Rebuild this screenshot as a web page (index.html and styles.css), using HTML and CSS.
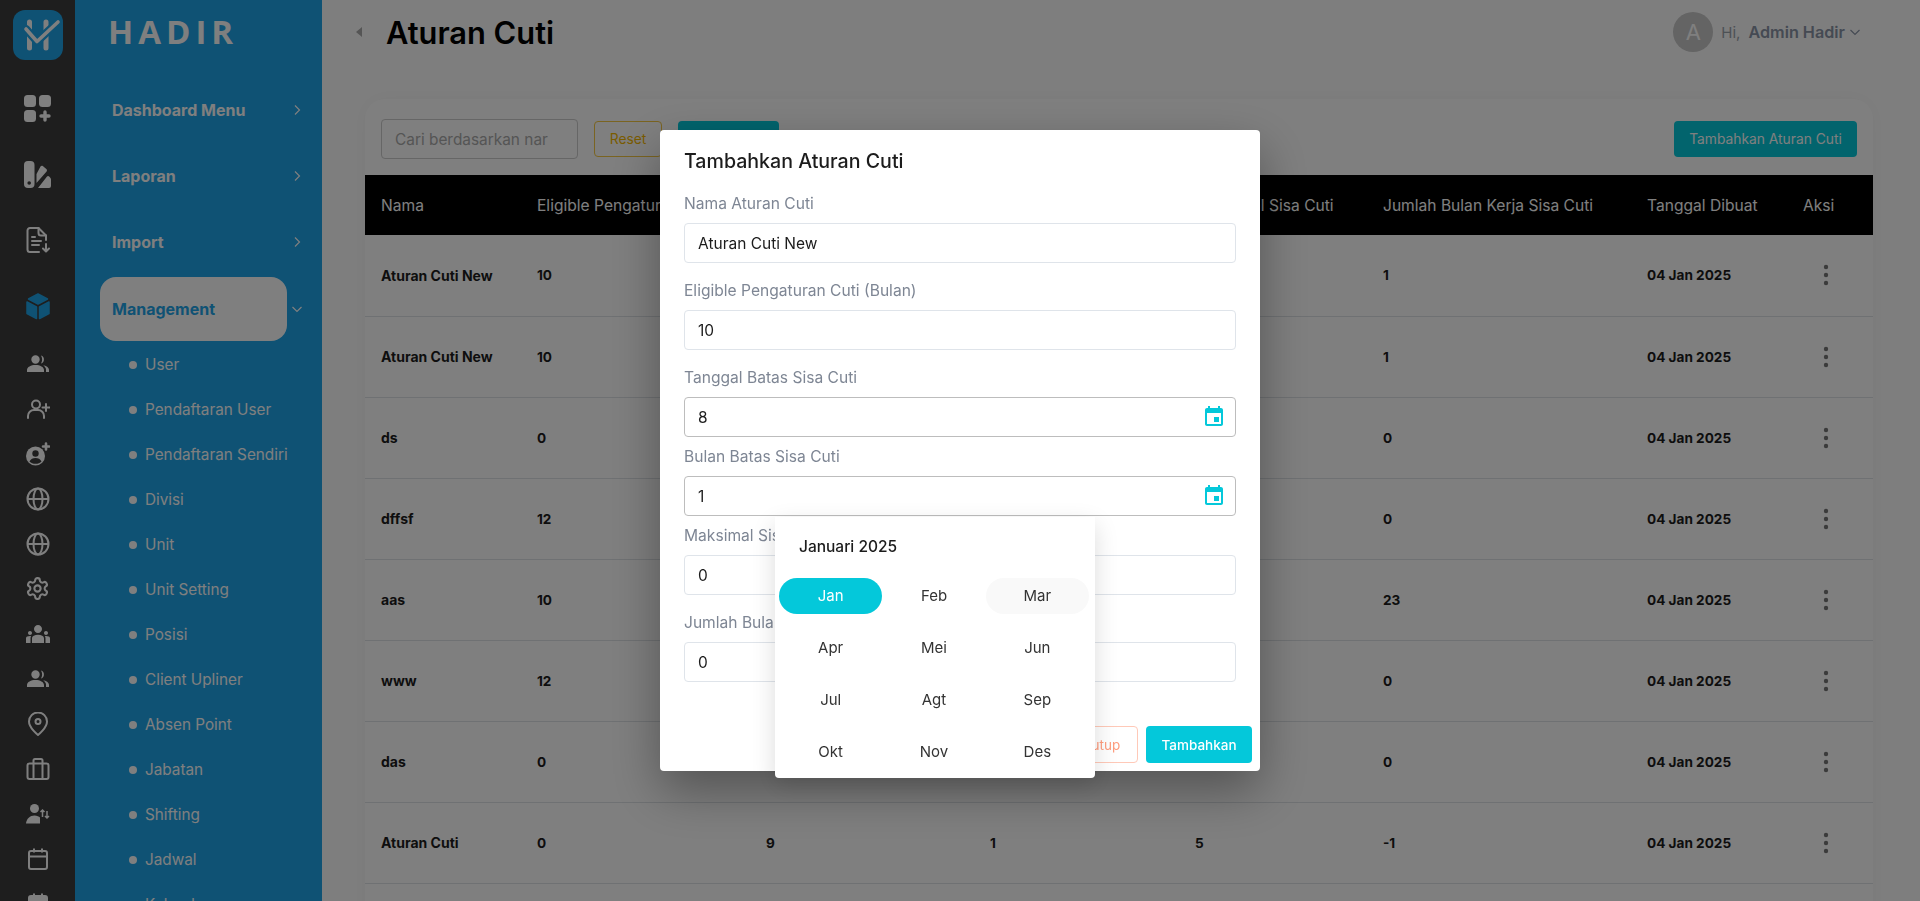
FILE: index.html
```html
<!DOCTYPE html>
<html lang="en">
<head>
  <meta charset="UTF-8">
  <meta name="viewport" content="width=device-width, initial-scale=1.0">
  <title>Aturan Cuti</title>
  <link rel="stylesheet" href="styles.css">
</head>
<body>
<svg class="defs" width="0" height="0">
  <symbol id="i-people" viewBox="0 0 24 24"><path fill="currentColor" d="M9.500 3.300a4.200 4.200 0 1 1 0 8.400 4.200 4.200 0 0 1 0-8.400zM1 20v-2c0-3 4-5 8.500-5s8.500 2 8.500 5v2zM15 3.500a4.200 4.200 0 0 1 0 8c1.500-2.500 1.500-5.500 0-8zM17 13.200c3 .4 6 2 6 4.800v2h-3v-2.500c0-1.700-1.300-3.300-3-4.300z"/></symbol>
  <symbol id="i-globe" viewBox="0 0 24 24"><g fill="none" stroke="currentColor" stroke-width="2"><circle cx="12" cy="12" r="10.5"/><ellipse cx="12" cy="12" rx="4.5" ry="10.5"/><path d="M1.5 12h21"/></g></symbol>
  <symbol id="i-calendar" viewBox="0 0 24 24"><g fill="none" stroke="currentColor" stroke-width="2"><rect x="3" y="4" width="18" height="18" rx="2"/><path d="M3 9.5h18M8 1.5v4M16 1.5v4"/></g></symbol>
  <symbol id="i-event" viewBox="0 0 24 24"><path fill="currentColor" d="M17 12h-5v5h5v-5zM16 1v2H8V1H6v2H5c-1.11 0-1.99.9-1.99 2L3 19c0 1.1.89 2 2 2h14c1.1 0 2-.9 2-2V5c0-1.1-.9-2-2-2h-1V1h-2zm3 18H5V8h14v11z"/></symbol>
  <symbol id="i-chev" viewBox="0 0 12 12"><path fill="none" stroke="currentColor" stroke-width="1.2" d="M4 1.500 8.500 6 4 10.500"/></symbol>
  <symbol id="i-dots" viewBox="0 0 6 24"><g fill="currentColor"><circle cx="3" cy="4" r="2.200"/><circle cx="3" cy="12" r="2.200"/><circle cx="3" cy="20" r="2.200"/></g></symbol>
</svg>

<div class="app">
  <aside class="rail">
    <div class="logo">
      <svg width="50" height="50" viewBox="0 0 50 50"><g fill="none" stroke-linecap="round" stroke-linejoin="round"><path stroke="#fff" stroke-width="5" d="M16.500 12v26M33 12v26"/><path stroke="#1ea4e8" stroke-width="8" d="M13 19l11 12.500L45 12"/><path stroke="#fff" stroke-width="3.600" d="M13 19l11 12.500L45 12"/></g></svg>
    </div>
    <div class="rail-item big"><svg width="27" height="27" viewBox="0 0 27 27"><g fill="currentColor"><rect width="12" height="12" rx="3.5"/><rect x="15" width="12" height="12" rx="3.5"/><rect y="15" width="12" height="12" rx="3.5"/></g><path fill="none" stroke="currentColor" stroke-width="3.4" stroke-linecap="round" d="M21 17v8M17 21h8"/></svg></div>
    <div class="rail-item big"><svg width="27" height="27" viewBox="0 0 27 27"><rect width="10.500" height="27" rx="4" fill="currentColor"/><circle cx="5.200" cy="22" r="1.800" fill="#3c3c3c"/><path fill="currentColor" d="M12.500 22v-9l4-7.500c.5-.9 1.500-1.100 2.300-.5l3.500 3c.8.7.9 1.700.3 2.500zM14 27l9-11.500c.6-.7 1.500-.7 2.200 0l1.300 1.600c.3.4.5.9.5 1.400V25a2 2 0 0 1-2 2z"/></svg></div>
    <div class="rail-item big"><svg width="24" height="26" viewBox="0 0 24 26"><g fill="none" stroke="currentColor" stroke-width="2" stroke-linecap="round" stroke-linejoin="round"><path d="M13 25H4a2.500 2.500 0 0 1-2.500-2.500v-19A2.500 2.500 0 0 1 4 1h8.500L20 8.500V13"/><path d="M12.500 1v5A2.500 2.500 0 0 0 15 8.500h5M6 10h3M6 14h9M6 18h7M20 17v7M17 21.500l3 3 3-3"/></g></svg></div>
    <div class="rail-item big active"><svg width="24" height="27" viewBox="0 0 24 27"><g fill="currentColor" stroke="currentColor" stroke-width="1.500" stroke-linejoin="round"><path d="M12 1l9.500 5L12 11 2.500 6z"/><path d="M1 9l9.500 5v11.500L1 20.500z"/><path d="M23 9l-9.500 5v11.500L23 20.500z"/></g></svg></div>

    <div class="rail-item"><svg width="24" height="24"><use href="#i-people"/></svg></div>
    <div class="rail-item"><svg width="24" height="24" viewBox="0 0 24 24"><g fill="none" stroke="currentColor" stroke-width="2" stroke-linecap="round"><circle cx="10" cy="7.500" r="4"/><path d="M2 21v-2a6 6 0 0 1 6-6h4a6 6 0 0 1 6 6v2M20 7v7M16.500 10.500h7"/></g></svg></div>
    <div class="rail-item"><svg width="24" height="24" viewBox="0 0 24 24"><circle cx="9.500" cy="14" r="9.500" fill="currentColor"/><circle cx="9.500" cy="11.500" r="3.200" fill="#3c3c3c"/><path fill="#3c3c3c" d="M3.500 19.500c1-2.500 3.500-3.500 6-3.500s5 1 6 3.500c-1.500 1.500-3.500 2.300-6 2.300s-4.500-.8-6-2.300z"/><path fill="none" stroke="currentColor" stroke-width="2.600" stroke-linecap="round" d="M20 1.500v6M17 4.500h6"/></svg></div>
    <div class="rail-item"><svg width="24" height="24"><use href="#i-globe"/></svg></div>
    <div class="rail-item"><svg width="24" height="24"><use href="#i-globe"/></svg></div>
    <div class="rail-item"><svg width="25" height="25" viewBox="0 0 24 24"><g fill="none" stroke="currentColor" stroke-width="2"><path d="M12.220 2h-.44a2 2 0 0 0-2 2v.18a2 2 0 0 1-1 1.730l-.43.250a2 2 0 0 1-2 0l-.15-.08a2 2 0 0 0-2.730.730l-.22.380a2 2 0 0 0 .730 2.730l.15.100a2 2 0 0 1 1 1.720v.510a2 2 0 0 1-1 1.740l-.15.090a2 2 0 0 0-.730 2.730l.22.380a2 2 0 0 0 2.730.730l.15-.08a2 2 0 0 1 2 0l.43.250a2 2 0 0 1 1 1.730V20a2 2 0 0 0 2 2h.44a2 2 0 0 0 2-2v-.18a2 2 0 0 1 1-1.730l.43-.25a2 2 0 0 1 2 0l.15.08a2 2 0 0 0 2.730-.73l.22-.39a2 2 0 0 0-.73-2.730l-.15-.08a2 2 0 0 1-1-1.740v-.5a2 2 0 0 1 1-1.740l.15-.09a2 2 0 0 0 .73-2.730l-.22-.38a2 2 0 0 0-2.730-.73l-.15.08a2 2 0 0 1-2 0l-.43-.25a2 2 0 0 1-1-1.730V4a2 2 0 0 0-2-2z"/><circle cx="12" cy="12" r="3"/></g></svg></div>
    <div class="rail-item"><svg width="24" height="24" viewBox="0 0 24 24"><path fill="currentColor" d="M12 12.750c1.630 0 3.070.39 4.240.9 1.080.48 1.760 1.560 1.760 2.730V21H6v-4.610c0-1.180.68-2.260 1.760-2.730 1.170-.52 2.610-.91 4.240-.91zM4 13c1.100 0 2-.9 2-2s-.9-2-2-2-2 .9-2 2 .9 2 2 2zm1.130 1.100c-.37-.06-.74-.1-1.130-.1-.99 0-1.930.21-2.780.58C.48 14.900 0 15.620 0 16.430V21h4.500v-4.610c0-.83.23-1.610.63-2.290zM20 13c1.100 0 2-.9 2-2s-.9-2-2-2-2 .9-2 2 .9 2 2 2zm4 3.430c0-.81-.48-1.530-1.220-1.850-.85-.37-1.790-.58-2.780-.58-.39 0-.76.04-1.130.1.4.68.63 1.460.63 2.290V21H24v-4.570zM12 3c2.200 0 4 1.800 4 4s-1.800 4-4 4-4-1.800-4-4 1.800-4 4-4z"/></svg></div>
    <div class="rail-item"><svg width="24" height="24"><use href="#i-people"/></svg></div>
    <div class="rail-item"><svg width="24" height="24" viewBox="0 0 24 24"><g fill="none" stroke="currentColor" stroke-width="2" stroke-linejoin="round"><path d="M12 23s9-7 9-13.500A9 9 0 0 0 3 9.500C3 16 12 23 12 23z"/><circle cx="12" cy="9.500" r="2.500"/></g></svg></div>
    <div class="rail-item"><svg width="24" height="24" viewBox="0 0 24 24"><g fill="none" stroke="currentColor" stroke-width="2"><rect x="1.500" y="6.500" width="21" height="15.500" rx="2"/><path d="M7.500 22V3.500A1.500 1.500 0 0 1 9 2h6a1.500 1.500 0 0 1 1.500 1.500V22"/></g></svg></div>
    <div class="rail-item"><svg width="24" height="24" viewBox="0 0 24 24"><circle cx="8.500" cy="6.500" r="4.500" fill="currentColor"/><path fill="currentColor" d="M0 21.500c.5-5 4-8 8.500-8 2.500 0 4.500 1 5.500 2v6z"/><path fill="none" stroke="currentColor" stroke-width="1.500" d="M16.500 15V8M14.500 10l2-2 2 2M21 9v7M19 14l2 2 2-2"/></svg></div>
    <div class="rail-item"><svg width="24" height="24"><use href="#i-calendar"/></svg></div>
    <div class="rail-item"><svg width="24" height="24" viewBox="0 0 24 24"><rect x="3" y="4" width="18" height="6" fill="currentColor"/><use href="#i-calendar" width="24" height="24"/></svg></div>
  </aside>

  <nav class="sidebar">
    <div class="brand">HADIR</div>
    <div class="nav-item"><span class="nav-label">Dashboard Menu</span><svg class="chev"><use href="#i-chev"/></svg></div>
    <div class="nav-item"><span class="nav-label">Laporan</span><svg class="chev"><use href="#i-chev"/></svg></div>
    <div class="nav-item"><span class="nav-label">Import</span><svg class="chev"><use href="#i-chev"/></svg></div>
    <div class="nav-item open"><span class="nav-label">Management</span><svg class="chev down"><use href="#i-chev"/></svg></div>
    <ul class="submenu">
      <li>User</li>
      <li>Pendaftaran User</li>
      <li>Pendaftaran Sendiri</li>
      <li>Divisi</li>
      <li>Unit</li>
      <li>Unit Setting</li>
      <li>Posisi</li>
      <li>Client Upliner</li>
      <li>Absen Point</li>
      <li>Jabatan</li>
      <li>Shifting</li>
      <li>Jadwal</li>
      <li>Kalender</li>
    </ul>
  </nav>

  <main class="main">
    <header class="topbar">
      <div class="page-title"><span class="caret"></span><h1>Aturan Cuti</h1></div>
      <div class="user">
        <span class="avatar">A</span>
        <span class="hi">Hi,</span>
        <span class="user-name">Admin Hadir</span>
        <svg class="user-chev" width="12" height="12"><use href="#i-chev"/></svg>
      </div>
    </header>

    <section class="card">
      <div class="toolbar">
        <div class="search">Cari berdasarkan nar</div>
        <span class="btn btn-reset">Reset</span>
        <span class="btn btn-search">Cari</span>
        <span class="btn btn-add">Tambahkan Aturan Cuti</span>
      </div>
      <table class="table">
        <colgroup>
          <col class="c-name"><col class="c-eligible"><col class="c-date"><col class="c-month"><col class="c-max"><col class="c-work"><col class="c-created"><col class="c-action">
        </colgroup>
        <thead>
          <tr><th>Nama</th><th>Eligible Pengaturan Cuti</th><th>Tanggal Batas Sisa Cuti</th><th>Bulan Batas Sisa Cuti</th><th>Maksimal Sisa Cuti</th><th>Jumlah Bulan Kerja Sisa Cuti</th><th>Tanggal Dibuat</th><th>Aksi</th></tr>
        </thead>
        <tbody>
          <tr><td>Aturan Cuti New</td><td>10</td><td>8</td><td>1</td><td>0</td><td>1</td><td>04 Jan 2025</td><td><svg class="dots" width="6" height="24"><use href="#i-dots"/></svg></td></tr>
          <tr><td>Aturan Cuti New</td><td>10</td><td>8</td><td>1</td><td>0</td><td>1</td><td>04 Jan 2025</td><td><svg class="dots" width="6" height="24"><use href="#i-dots"/></svg></td></tr>
          <tr><td>ds</td><td>0</td><td>1</td><td>1</td><td>0</td><td>0</td><td>04 Jan 2025</td><td><svg class="dots" width="6" height="24"><use href="#i-dots"/></svg></td></tr>
          <tr><td>dffsf</td><td>12</td><td>1</td><td>1</td><td>0</td><td>0</td><td>04 Jan 2025</td><td><svg class="dots" width="6" height="24"><use href="#i-dots"/></svg></td></tr>
          <tr><td>aas</td><td>10</td><td>1</td><td>1</td><td>0</td><td>23</td><td>04 Jan 2025</td><td><svg class="dots" width="6" height="24"><use href="#i-dots"/></svg></td></tr>
          <tr><td>www</td><td>12</td><td>1</td><td>1</td><td>0</td><td>0</td><td>04 Jan 2025</td><td><svg class="dots" width="6" height="24"><use href="#i-dots"/></svg></td></tr>
          <tr><td>das</td><td>0</td><td>1</td><td>1</td><td>0</td><td>0</td><td>04 Jan 2025</td><td><svg class="dots" width="6" height="24"><use href="#i-dots"/></svg></td></tr>
          <tr><td>Aturan Cuti</td><td>0</td><td>9</td><td>1</td><td>5</td><td>-1</td><td>04 Jan 2025</td><td><svg class="dots" width="6" height="24"><use href="#i-dots"/></svg></td></tr>
        </tbody>
      </table>
    </section>
  </main>
</div>

<div class="backdrop">
  <div class="modal">
    <h2 class="modal-title">Tambahkan Aturan Cuti</h2>

    <div class="field">
      <div class="field-label">Nama Aturan Cuti</div>
      <div class="input">Aturan Cuti New</div>
    </div>
    <div class="field">
      <div class="field-label">Eligible Pengaturan Cuti (Bulan)</div>
      <div class="input">10</div>
    </div>
    <div class="field field-date">
      <div class="field-label">Tanggal Batas Sisa Cuti</div>
      <div class="input input-date">8<svg width="24" height="24"><use href="#i-event"/></svg></div>
    </div>
    <div class="field field-date">
      <div class="field-label">Bulan Batas Sisa Cuti</div>
      <div class="input input-date">1<svg width="24" height="24"><use href="#i-event"/></svg></div>
    </div>
    <div class="field">
      <div class="field-label">Maksimal Sisa Cuti</div>
      <div class="input">0</div>
    </div>
    <div class="field">
      <div class="field-label">Jumlah Bulan Kerja Sisa Cuti</div>
      <div class="input">0</div>
    </div>

    <div class="modal-footer">
      <span class="btn btn-close">Tutup</span>
      <span class="btn btn-submit">Tambahkan</span>
    </div>

    <div class="month-popup">
      <div class="month-title">Januari 2025</div>
      <div class="month-grid">
        <span class="month selected">Jan</span><span class="month">Feb</span><span class="month hover">Mar</span>
        <span class="month">Apr</span><span class="month">Mei</span><span class="month">Jun</span>
        <span class="month">Jul</span><span class="month">Agt</span><span class="month">Sep</span>
        <span class="month">Okt</span><span class="month">Nov</span><span class="month">Des</span>
      </div>
    </div>
  </div>
</div>
</body>
</html>
```

FILE: styles.css
```css
* {
  box-sizing: border-box;
}

body {
  margin: 0;
  height: 100vh;
  overflow: hidden;
  background: #fdfdfd;
  color: #1c1c1c;
  font-family: Inter, "Liberation Sans", sans-serif;
  font-size: 15px;
}

.defs {
  position: absolute;
}

.app {
  display: flex;
  height: 100vh;
  overflow: hidden;
}

/* icon rail */
.rail {
  flex: 0 0 75px;
  display: flex;
  flex-direction: column;
  align-items: center;
  background: #3c3c3c;
  color: #fff;
  padding-top: 10px;
  overflow: hidden;
}

.logo {
  flex: none;
  width: 50px;
  height: 50px;
  margin-bottom: 15px;
  border-radius: 12px;
  background: #1ea4e8;
}

.logo svg {
  display: block;
}

.rail-item {
  flex: none;
  height: 45px;
  display: flex;
  align-items: center;
  justify-content: center;
}

.rail-item.big {
  height: 66px;
}

.rail-item.active {
  color: #1ea4e8;
  margin-bottom: 2px;
}

/* sidebar */
.sidebar {
  flex: 0 0 247px;
  background: #1ea4e8;
  color: #fff;
  overflow: hidden;
}

.brand {
  height: 77px;
  padding: 15px 0 0 33px;
  font-family: "Open Sans", sans-serif;
  font-size: 33px;
  font-weight: 700;
  line-height: 34px;
  letter-spacing: 5px;
}

.nav-item {
  height: 66px;
  display: flex;
  align-items: center;
  font-size: 16px;
  font-weight: 700;
}

.nav-item.open {
  margin-top: 1px;
}

.nav-label {
  width: 187px;
  height: 64px;
  margin-left: 25px;
  padding-left: 12px;
  display: flex;
  align-items: center;
  border-radius: 16px;
}

.chev {
  width: 12px;
  height: 12px;
  margin-left: 4px;
}

.chev.down {
  transform: rotate(90deg);
}

.nav-item.open .nav-label {
  background: #fff;
  color: #1ea4e8;
}

.submenu {
  margin: 0;
  padding: 0;
  list-style: none;
}

.submenu li {
  height: 45px;
  padding-left: 54px;
  display: flex;
  align-items: center;
  gap: 8px;
  font-size: 15.3px;
}

.submenu li::before {
  content: "";
  width: 8px;
  height: 8px;
  border-radius: 50%;
  background: #fff;
}

/* main */
.main {
  flex: 1;
  min-width: 0;
}

.topbar {
  height: 64px;
  padding: 0 59px 0 34px;
  display: flex;
  align-items: center;
  justify-content: space-between;
}

.page-title {
  display: flex;
  align-items: center;
  gap: 24px;
}

.caret {
  width: 0;
  height: 0;
  border-top: 5px solid transparent;
  border-bottom: 5px solid transparent;
  border-right: 6px solid #aaa;
}

h1 {
  margin: 0;
  color: #000;
  font-size: 30.8px;
  font-weight: 600;
}

.user {
  display: flex;
  align-items: center;
}

.avatar {
  width: 40px;
  height: 40px;
  margin-right: 8px;
  display: flex;
  align-items: center;
  justify-content: center;
  border-radius: 50%;
  background: #c8c8c8;
  color: #fff;
  font-size: 22px;
}

.hi {
  margin-right: 8px;
  color: #9aa2ab;
  font-size: 15px;
}

.user-name {
  color: #8a94a6;
  font-size: 16.2px;
  font-weight: 600;
}

.user-chev {
  margin-left: 4px;
  color: #8a94a6;
  transform: rotate(90deg);
}

/* card + table */
.card {
  margin: 35px 47px 0 43px;
  min-height: 840px;
  background: #fff;
  border-radius: 20px 20px 0 0;
  box-shadow: 0 0 20px rgba(0, 0, 0, 0.04);
}

.toolbar {
  height: 76px;
  padding: 20px 16px 16px;
  display: flex;
  align-items: center;
  gap: 16px;
}

.search {
  width: 197px;
  height: 40px;
  padding-left: 13px;
  display: flex;
  align-items: center;
  border: 1px solid #ccc;
  border-radius: 4px;
  color: #aaa;
  font-size: 15.4px;
  white-space: nowrap;
  overflow: hidden;
}

.btn {
  height: 36px;
  padding: 0;
  display: inline-flex;
  align-items: center;
  justify-content: center;
  border-radius: 4px;
  font-size: 13.8px;
  white-space: nowrap;
}

.btn-reset {
  width: 68px;
  border: 1px solid #f5c842;
  color: #f5b800;
}

.btn-search {
  width: 101px;
  background: #04c8da;
  color: #fff;
}

.btn-add {
  width: 183px;
  margin-left: auto;
  background: #04c8da;
  color: #fff;
}

.table {
  width: 100%;
  border-collapse: collapse;
  table-layout: fixed;
}

.c-name { width: 156px; }
.c-eligible { width: 229px; }
.c-date { width: 224px; }
.c-month { width: 205px; }
.c-max { width: 188px; }
.c-work { width: 264px; }
.c-created { width: 156px; }
.c-action { width: 86px; }

.table th {
  height: 60px;
  padding: 0 16px;
  background: #000;
  color: #fff;
  font-size: 15.6px;
  font-weight: 400;
  text-align: left;
  white-space: nowrap;
  overflow: hidden;
}

.table td {
  height: 81px;
  padding: 0 16px;
  border-bottom: 1px solid #dee2e6;
  font-size: 13.6px;
  font-weight: 700;
  white-space: nowrap;
}

.table td:first-child {
  font-size: 14px;
}

.dots {
  display: block;
  margin-left: 20px;
  color: #777;
}

/* modal */
.backdrop {
  position: fixed;
  inset: 0;
  display: flex;
  justify-content: center;
  align-items: flex-start;
  padding-top: 130px;
  background: rgba(0, 0, 0, 0.5);
}

.modal {
  position: relative;
  width: 600px;
  height: 641px;
  padding: 18px 8px 8px 24px;
  background: #fff;
  border-radius: 4px;
  box-shadow: 0 20px 50px rgba(0, 0, 0, 0.35);
}

.modal-title {
  height: 26px;
  margin: 0 0 18px;
  font-size: 19.6px;
  font-weight: 500;
  line-height: 26px;
  color: #1c1c1c;
}

.field {
  width: 552px;
  margin-bottom: 16px;
}

.field-date {
  margin-bottom: 8px;
}

.field-label {
  height: 23px;
  margin-bottom: 8px;
  color: #7e8694;
  font-size: 15.6px;
  line-height: 23px;
}

.input {
  height: 40px;
  padding: 0 9px 0 13px;
  display: flex;
  align-items: center;
  justify-content: space-between;
  border: 1px solid #dfe4ea;
  border-radius: 4px;
  font-size: 15.5px;
}

.input-date {
  border-color: #bdbdbd;
  color: #1c1c1c;
}

.input-date svg {
  color: #04c8da;
}

.modal-footer {
  margin-top: 44px;
  display: flex;
  justify-content: flex-end;
  gap: 8px;
}

.modal-footer .btn {
  height: 37px;
  font-size: 13.5px;
}

.btn-close {
  border: 1px solid #ffc9b8;
  color: #ff9d7e;
  width: 72px;
}

.btn-submit {
  width: 106px;
  background: #04c8da;
  color: #fff;
  font-weight: 500;
}

.month-popup {
  position: absolute;
  left: 115px;
  top: 387px;
  width: 320px;
  height: 261px;
  padding: 0 6px 0 4px;
  background: #fff;
  border-radius: 0 0 4px 4px;
  box-shadow: 0 8px 24px rgba(0, 0, 0, 0.14);
}

.month-title {
  height: 61px;
  padding-left: 20px;
  font-size: 15.5px;
  font-weight: 500;
  line-height: 59px;
}

.month-grid {
  display: grid;
  grid-template-columns: repeat(3, 1fr);
  row-gap: 16px;
}

.month {
  height: 36px;
  padding-bottom: 1px;
  display: flex;
  align-items: center;
  justify-content: center;
  border-radius: 18px;
  color: #333;
  font-size: 15px;
}

.month.selected {
  background: #04c8da;
  color: #fff;
}

.month.hover {
  background: #f9f9f9;
}
```
